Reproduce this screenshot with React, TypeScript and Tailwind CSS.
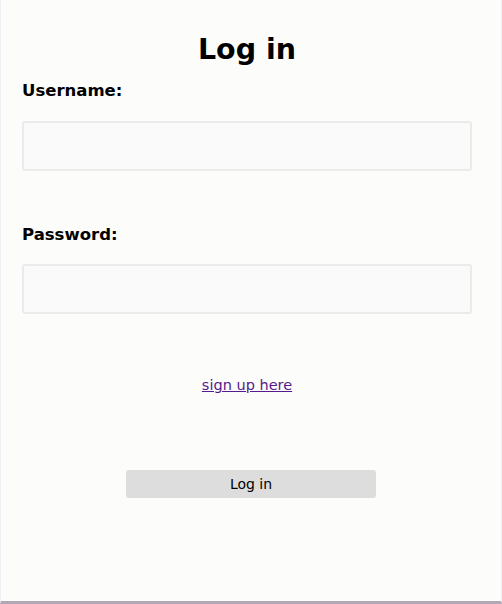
export default function App() {
  return (
    <div className="w-[502px] h-[604px] bg-[#fcfcfa] border-l border-r border-b-[3px] border-l-[#efeff4] border-r-[#efeff4] border-b-[#b3a7b6] font-['DejaVu_Sans',sans-serif] text-black flex flex-col">
      <form className="w-[492px] px-[21px] flex flex-col" onSubmit={(e) => e.preventDefault()}>
        <h1 className="mt-[32px] text-center text-[28.5px] leading-[36px] font-bold">Log in</h1>
        <label htmlFor="username" className="mt-[12px] text-[16.5px] leading-[22px] font-bold">
          Username:
        </label>
        <input
          id="username"
          type="text"
          className="mt-[19px] h-[50px] w-full rounded-[3px] border-2 border-[#ebebeb] bg-[#fafafa] px-2 outline-none"
        />
        <label htmlFor="password" className="mt-[53px] text-[16.5px] leading-[22px] font-bold">
          Password:
        </label>
        <input
          id="password"
          type="password"
          className="mt-[18px] h-[50px] w-full rounded-[3px] border-2 border-[#ebebeb] bg-[#fafafa] px-2 outline-none"
        />
        <div className="mt-[59px] text-center">
          <a href="#" className="text-[14.5px] leading-[20px] text-[#551a8b] underline">
            sign up here
          </a>
        </div>
      </form>
      <div className="mt-[73px] flex justify-center">
        <button
          type="button"
          className="w-[250px] h-[28px] rounded-[3px] bg-[#dddddd] text-[14px] leading-[28px] text-black"
        >
          Log in
        </button>
      </div>
    </div>
  );
}
